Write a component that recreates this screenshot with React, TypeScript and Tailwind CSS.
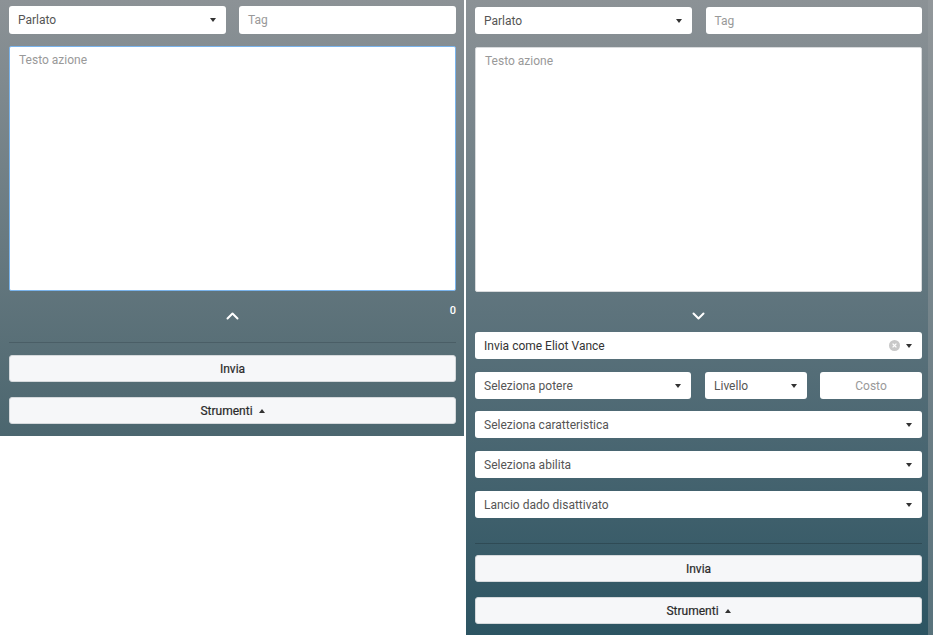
import React from 'react';

const font = { fontFamily: 'Roboto, "Liberation Sans", sans-serif' };

function Caret() {
  return (
    <span className="inline-block w-0 h-0 border-l-[3.5px] border-r-[3.5px] border-t-[4px] border-l-transparent border-r-transparent border-t-[#333]" />
  );
}

function Select({ label, dark = false, clearable = false, className = '' }: { label: string; dark?: boolean; clearable?: boolean; className?: string }) {
  return (
    <div className={`h-[27px] bg-white rounded-[3px] flex items-center pl-[9px] pr-[10px] text-[12px] ${dark ? 'text-[#333]' : 'text-[#555]'} ${className}`}>
      <span className="flex-1 truncate">{label}</span>
      {clearable && (
        <svg width="11" height="11" viewBox="0 0 11 11" className="mr-[6px]">
          <circle cx="5.5" cy="5.5" r="5.5" fill="#c8c8c8" />
          <path d="M3.6 3.6 L7.4 7.4 M7.4 3.6 L3.6 7.4" stroke="#fff" strokeWidth="1.3" />
        </svg>
      )}
      <Caret />
    </div>
  );
}

function Input({ placeholder, center = false, className = '' }: { placeholder: string; center?: boolean; className?: string }) {
  return (
    <div className={`h-[27px] bg-white rounded-[3px] flex items-center px-[9px] text-[12px] text-[#999] ${center ? 'justify-center' : ''} ${className}`}>
      {placeholder}
    </div>
  );
}

function Button({ children }: { children: React.ReactNode }) {
  return (
    <div className="h-[27px] bg-[#f6f7f9] border border-[#d5d9dc] rounded-[3px] flex items-center justify-center gap-[6px] text-[12px] text-[#2a2a2a] [-webkit-text-stroke:0.2px_#2a2a2a]">
      {children}
    </div>
  );
}

function Chevron({ up }: { up?: boolean }) {
  return (
    <svg width="13" height="8" viewBox="0 0 13 8" fill="none" stroke="#fff" strokeWidth="2" strokeLinecap="round" strokeLinejoin="round">
      {up ? <polyline points="1.5,6.5 6.5,1.5 11.5,6.5" /> : <polyline points="1.5,1.5 6.5,6.5 11.5,1.5" />}
    </svg>
  );
}

function Strumenti() {
  return (
    <Button>
      Strumenti
      <span className="inline-block w-0 h-0 border-l-[3.5px] border-r-[3.5px] border-b-[4px] border-l-transparent border-r-transparent border-b-[#333]" />
    </Button>
  );
}

export default function App() {
  return (
    <div className="min-h-[635px] bg-white flex items-start gap-[2px]" style={font}>
      {/* compact composer */}
      <div className="w-[464px] h-[436px] pl-[9px] pr-[8px] pt-[6px] pb-[12px] bg-linear-to-b from-[#8c9296] to-[#4b666f]">
        <div className="grid grid-cols-2 gap-[13px]">
          <Select label="Parlato" className="h-[28px]" />
          <Input placeholder="Tag" className="h-[28px]" />
        </div>
        <div className="mt-[12px] h-[245px] bg-white border border-[#7ab4ec] rounded-[2px] px-[9px] py-[4px] text-[12px] text-[#999]">
          Testo azione
        </div>
        <div className="relative h-[51px] flex justify-center pt-[21px]">
          <Chevron up />
          <span className="absolute right-0 top-[12px] text-[11px] font-medium text-white">0</span>
        </div>
        <div className="border-t border-[#4a5e66]" />
        <div className="mt-[12px] flex flex-col gap-[15px]">
          <Button>Invia</Button>
          <Strumenti />
        </div>
      </div>

      {/* expanded composer */}
      <div className="w-[467px] h-[635px] pl-[9px] pr-[6px] pt-[7px] bg-linear-to-b from-[#8c9296] to-[#2c5462] border-r-[5px] border-r-[#9a9fa3]/40">
        <div className="grid grid-cols-2 gap-[14px]">
          <Select label="Parlato" />
          <Input placeholder="Tag" />
        </div>
        <div className="mt-[13px] h-[245px] bg-white border border-[#d8dadc] rounded-[2px] px-[9px] py-[4px] text-[12px] text-[#999]">
          Testo azione
        </div>
        <div className="h-[40px] flex justify-center pt-[20px]">
          <Chevron />
        </div>
        <div className="flex flex-col gap-[13px]">
          <Select label="Invia come Eliot Vance" dark clearable />
          <div className="flex gap-[13px] mb-[-1px]">
            <Select label="Seleziona potere" className="w-[216px] mr-[1px]" />
            <Select label="Livello" className="w-[102px]" />
            <div className="flex-1"><Input placeholder="Costo" center /></div>
          </div>
          <Select label="Seleziona caratteristica" />
          <Select label="Seleziona abilita" />
          <Select label="Lancio dado disattivato" />
        </div>
        <div className="mt-[25px] border-t border-[#2f4b55]" />
        <div className="mt-[11px] flex flex-col gap-[15px]">
          <Button>Invia</Button>
          <Strumenti />
        </div>
      </div>
    </div>
  );
}
